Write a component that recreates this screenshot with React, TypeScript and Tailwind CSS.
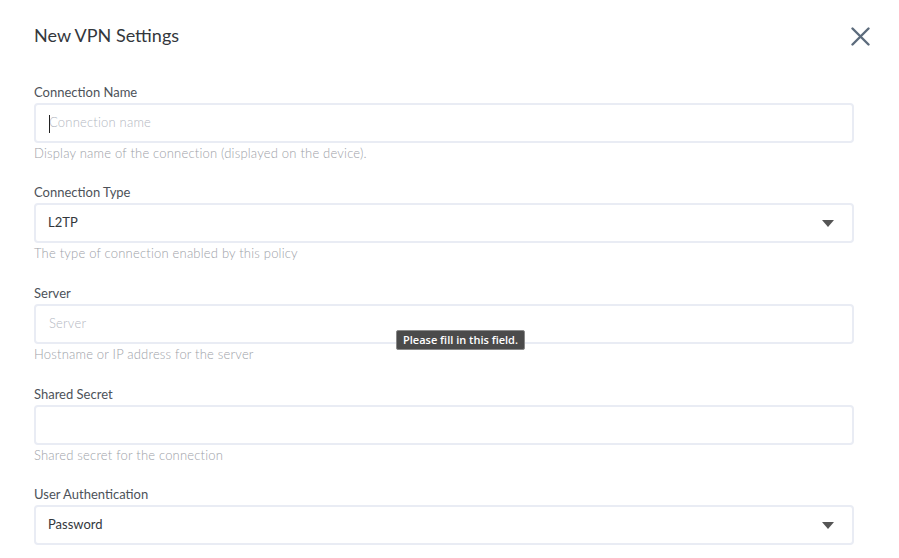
function Field({
  label,
  help,
  tall,
  children,
}: {
  label: string;
  help?: string;
  tall?: boolean;
  children: React.ReactNode;
}) {
  return (
    <div className={tall ? "h-[101px]" : "h-[100px]"}>
      <label className="block text-[13px] leading-[18px] text-[#4d5259] mb-[2px]">{label}</label>
      {children}
      {help && (
        <p className="mt-[1px] text-[13px] leading-[18px] font-light tracking-[0.2px] text-[#9da1a8]">{help}</p>
      )}
    </div>
  );
}

function TextBox({ placeholder, caret }: { placeholder?: string; caret?: boolean }) {
  return (
    <div className="relative h-[40px] w-[820px] rounded-[4px] border-2 border-[#e9ecf4] bg-white flex items-center px-[13px]">
      {caret && <span className="absolute left-[13px] top-[10px] h-[18px] w-px bg-[#222]" />}
      <span className="text-[13px] font-light tracking-[0.2px] text-[#b4b8c2]">{placeholder}</span>
    </div>
  );
}

function SelectBox({ value }: { value: string }) {
  return (
    <div className="h-[40px] w-[820px] rounded-[4px] border-2 border-[#e9ecf4] bg-white flex items-center justify-between pl-[12px] pr-[18px]">
      <span className="text-[13px] text-[#33373c]">{value}</span>
      <svg width="12" height="7" viewBox="0 0 12 7">
        <path d="M0 0h12L6 7z" fill="#555" />
      </svg>
    </div>
  );
}

export default function App() {
  return (
    <div
      className="relative h-[558px] w-[899px] overflow-hidden bg-white"
      style={{ fontFamily: "Lato, 'Noto Sans', sans-serif" }}
    >
      <div className="flex items-start justify-between pl-[34px] pr-[29px] pt-[24px]">
        <h1 className="text-[18px] leading-[22px] text-[#33373c]">New VPN Settings</h1>
        <svg className="mt-[3px]" width="19" height="19" viewBox="0 0 19 19">
          <path d="M1.5 1.5l16 16M17.5 1.5l-16 16" stroke="#5c6b7c" strokeWidth="2.4" strokeLinecap="round" />
        </svg>
      </div>

      <div className="pl-[34px] pt-[37px]">
        <Field label="Connection Name" help="Display name of the connection (displayed on the device).">
          <TextBox placeholder="Connection name" caret />
        </Field>
        <Field tall label="Connection Type" help="The type of connection enabled by this policy">
          <SelectBox value="L2TP" />
        </Field>
        <Field tall label="Server" help="Hostname or IP address for the server">
          <TextBox placeholder="Server" />
        </Field>
        <Field label="Shared Secret" help="Shared secret for the connection">
          <TextBox />
        </Field>
        <Field label="User Authentication">
          <SelectBox value="Password" />
        </Field>
      </div>

      <div
        className="absolute left-[396px] top-[330px] rounded-[2px] border border-[#8a8a8a] bg-[#4b4b4b] px-[6px] py-[2px] text-[11px] leading-[14px] font-semibold text-white"
        style={{ fontFamily: "'Open Sans', sans-serif" }}
      >
        Please fill in this field.
      </div>
    </div>
  );
}
